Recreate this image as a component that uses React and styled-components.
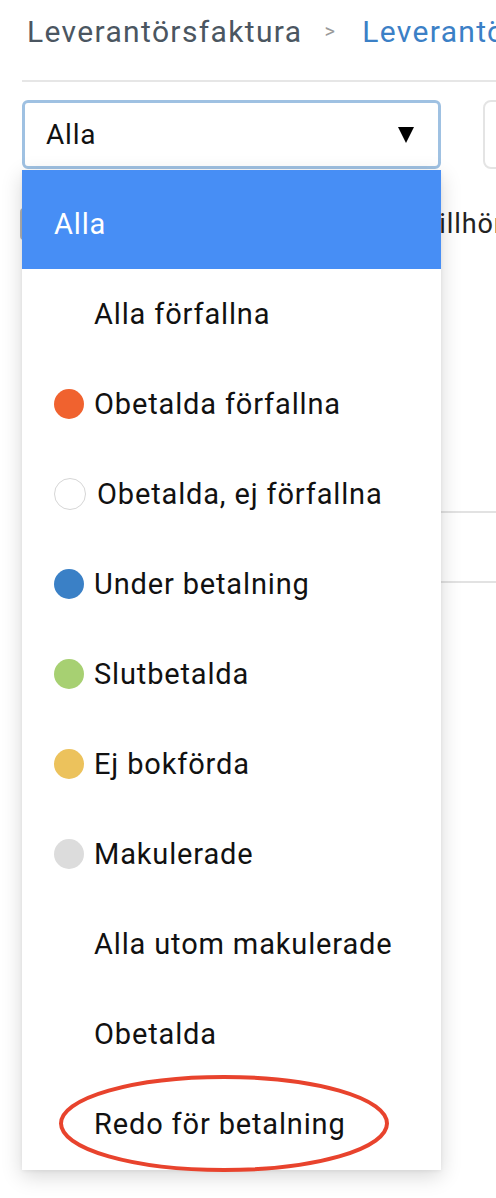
import styled, { createGlobalStyle } from 'styled-components';

const GlobalStyle = createGlobalStyle`
  body {
    margin: 0;
    background: #fff;
    font-family: Roboto, "Liberation Sans", sans-serif;
    overflow: hidden;
  }
  * {
    box-sizing: border-box;
  }
`;

const Page = styled.div`
  position: relative;
  width: 496px;
  height: 1198px;
  overflow: hidden;
`;

const Breadcrumb = styled.div`
  display: flex;
  align-items: center;
  padding: 14px 0 0 27px;
  font-size: 30px;
  line-height: 35px;
  letter-spacing: 1.35px;
  white-space: nowrap;
`;

const Crumb = styled.span`
  color: ${(props) => (props.active ? '#3b80c6' : '#4b5661')};
`;

const Separator = styled.span`
  color: #9a9a9a;
  font-size: 20px;
  margin: 0 26px 0 22px;
`;

const Divider = styled.div`
  margin: 31px 0 0 22px;
  border-top: 2px solid #e6e6e6;
`;

const Toolbar = styled.div`
  display: flex;
  gap: 42px;
  margin: 18px 0 0 22px;
`;

const SelectBox = styled.div`
  position: relative;
  flex: 0 0 419px;
  height: 69px;
  display: flex;
  align-items: center;
  justify-content: space-between;
  padding: 0 24px 0 21px;
  border: 3px solid #9fc1e2;
  border-radius: 6px;
  font-size: 28px;
  letter-spacing: 0.8px;
  color: #111;
`;

const Arrow = styled.span`
  width: 0;
  height: 0;
  border-left: 8px solid transparent;
  border-right: 8px solid transparent;
  border-top: 16px solid #000;
`;

const SearchBox = styled.div`
  flex: 0 0 200px;
  height: 69px;
  border: 2px solid #e4e4e4;
  border-radius: 8px;
`;

const FilterRow = styled.div`
  display: flex;
  align-items: center;
  gap: 46px;
  margin: 39px 0 0 20px;
  font-size: 27px;
  letter-spacing: 0.9px;
  color: #222;
  white-space: nowrap;
`;

const Checkbox = styled.span`
  flex: 0 0 32px;
  height: 32px;
  border: 2px solid #b5b5b5;
  border-radius: 4px;
`;

const Table = styled.div`
  margin: 271px 0 0 22px;
`;

const TableRow = styled.div`
  height: 70px;
  border-top: 2px solid #e2e2e2;
`;

const Menu = styled.ul`
  position: absolute;
  left: 22px;
  top: 170px;
  width: 419px;
  margin: 0;
  padding: 0 0 1px;
  list-style: none;
  background: #fff;
  box-shadow: 0 6px 20px rgba(0, 0, 0, 0.16), 0 1px 4px rgba(0, 0, 0, 0.06);
`;

const Option = styled.li`
  position: relative;
  height: 90px;
  display: flex;
  align-items: center;
  gap: ${(props) => (props.outlined ? '11px' : '10px')};
  padding-left: ${(props) => (props.indent ? '72px' : '32px')};
  font-size: 29px;
  letter-spacing: 0.85px;
  color: ${(props) => (props.selected ? '#fff' : '#111')};
  background: ${(props) => (props.selected ? '#478ef5' : 'transparent')};
  white-space: nowrap;

  &:first-child {
    height: 99px;
    padding-top: 9px;
  }
`;

const Dot = styled.span`
  flex: 0 0 auto;
  width: ${(props) => (props.outlined ? '32px' : '30px')};
  height: ${(props) => (props.outlined ? '32px' : '30px')};
  border-radius: 50%;
  background: ${(props) => props.color};
  border: ${(props) => (props.outlined ? '1px solid #d6d6d6' : 'none')};
`;

const Highlight = styled.svg`
  position: absolute;
  left: 37px;
  top: -4px;
  width: 330px;
  height: 97px;
  overflow: visible;
  pointer-events: none;
`;

const options = [
  { label: 'Alla', selected: true },
  { label: 'Alla förfallna', indent: true },
  { label: 'Obetalda förfallna', dot: '#f0622f' },
  { label: 'Obetalda, ej förfallna', dot: '#fff', outlined: true },
  { label: 'Under betalning', dot: '#3a80c6' },
  { label: 'Slutbetalda', dot: '#a7d072' },
  { label: 'Ej bokförda', dot: '#ecc25c' },
  { label: 'Makulerade', dot: '#dcdcdc' },
  { label: 'Alla utom makulerade', indent: true },
  { label: 'Obetalda', indent: true },
  { label: 'Redo för betalning', indent: true, circled: true },
];

export default function App() {
  return (
    <Page>
      <GlobalStyle />
      <Breadcrumb>
        <Crumb>Leverantörsfaktura</Crumb>
        <Separator>&gt;</Separator>
        <Crumb active>Leverantörsfakturor</Crumb>
      </Breadcrumb>
      <Divider />
      <Toolbar>
        <SelectBox>
          Alla
          <Arrow />
        </SelectBox>
        <SearchBox />
      </Toolbar>
      <FilterRow>
        <Checkbox />
        Visa endast fakturor som tillhör mig
      </FilterRow>
      <Table>
        <TableRow />
        <TableRow />
      </Table>

      <Menu>
        {options.map((o) => (
          <Option
            key={o.label}
            selected={o.selected}
            indent={o.indent}
            outlined={o.outlined}
          >
            {o.dot && <Dot color={o.dot} outlined={o.outlined} />}
            {o.label}
            {o.circled && (
              <Highlight viewBox="0 0 330 97">
                <ellipse
                  cx="165"
                  cy="48.5"
                  rx="163"
                  ry="46.5"
                  fill="none"
                  stroke="#e8432d"
                  strokeWidth="4"
                />
              </Highlight>
            )}
          </Option>
        ))}
      </Menu>
    </Page>
  );
}
